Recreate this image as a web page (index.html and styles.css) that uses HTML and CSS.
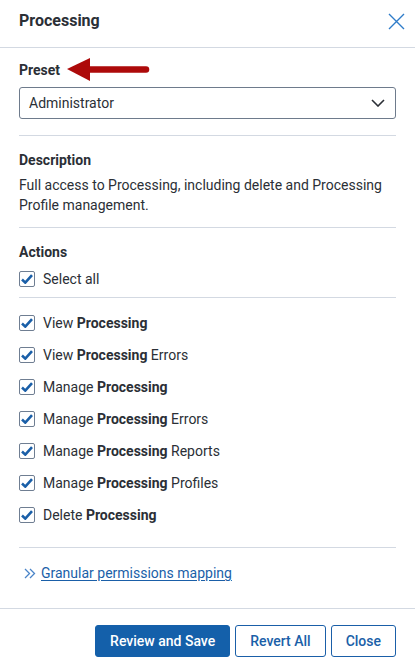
FILE: index.html
```html
<!DOCTYPE html>
<html>
<head>
<meta charset="utf-8">
<link rel="stylesheet" href="styles.css">
</head>
<body>
<div class="panel">
  <header class="header">
    <h1 class="title">Processing</h1>
    <button class="close-x" aria-label="Close">
      <svg width="17" height="17" viewBox="0 0 17 17"><path d="M1 1L16 16M16 1L1 16" stroke="#2f7cc9" stroke-width="1.4" fill="none"/></svg>
    </button>
  </header>
  <main class="body">
    <div class="preset-label-row">
      <span class="label">Preset</span>
      <svg class="arrow" width="84" height="26" viewBox="0 0 84 26"><path d="M0 12L23 1V24Z" fill="#ad0a0a"/><line x1="20" y1="12.5" x2="79" y2="12.5" stroke="#ad0a0a" stroke-width="6.5" stroke-linecap="round"/></svg>
    </div>
    <div class="select">
      <span>Administrator</span>
      <svg width="14" height="8" viewBox="0 0 14 8"><path d="M1 1L7 7L13 1" stroke="#2b2f36" stroke-width="1.6" fill="none"/></svg>
    </div>
    <hr class="divider d1">
    <div class="label">Description</div>
    <p class="desc">Full access to Processing, including delete and Processing Profile management.</p>
    <hr class="divider d2">
    <div class="label">Actions</div>
    <label class="check-row select-all"><span class="cb"><svg width="12" height="10" viewBox="0 0 12 10"><path d="M1 5.5L4.3 8.6L11 1.2" stroke="#1a5fa8" stroke-width="2.6" fill="none"/></svg></span>Select all</label>
    <hr class="divider d3">
    <ul class="list">
      <li class="check-row"><span class="cb"><svg width="12" height="10" viewBox="0 0 12 10"><path d="M1 5.5L4.3 8.6L11 1.2" stroke="#1a5fa8" stroke-width="2.6" fill="none"/></svg></span>View&nbsp;<b>Processing</b></li>
      <li class="check-row"><span class="cb"><svg width="12" height="10" viewBox="0 0 12 10"><path d="M1 5.5L4.3 8.6L11 1.2" stroke="#1a5fa8" stroke-width="2.6" fill="none"/></svg></span>View&nbsp;<b>Processing</b>&nbsp;Errors</li>
      <li class="check-row"><span class="cb"><svg width="12" height="10" viewBox="0 0 12 10"><path d="M1 5.5L4.3 8.6L11 1.2" stroke="#1a5fa8" stroke-width="2.6" fill="none"/></svg></span>Manage&nbsp;<b>Processing</b></li>
      <li class="check-row"><span class="cb"><svg width="12" height="10" viewBox="0 0 12 10"><path d="M1 5.5L4.3 8.6L11 1.2" stroke="#1a5fa8" stroke-width="2.6" fill="none"/></svg></span>Manage&nbsp;<b>Processing</b>&nbsp;Errors</li>
      <li class="check-row"><span class="cb"><svg width="12" height="10" viewBox="0 0 12 10"><path d="M1 5.5L4.3 8.6L11 1.2" stroke="#1a5fa8" stroke-width="2.6" fill="none"/></svg></span>Manage&nbsp;<b>Processing</b>&nbsp;Reports</li>
      <li class="check-row"><span class="cb"><svg width="12" height="10" viewBox="0 0 12 10"><path d="M1 5.5L4.3 8.6L11 1.2" stroke="#1a5fa8" stroke-width="2.6" fill="none"/></svg></span>Manage&nbsp;<b>Processing</b>&nbsp;Profiles</li>
      <li class="check-row"><span class="cb"><svg width="12" height="10" viewBox="0 0 12 10"><path d="M1 5.5L4.3 8.6L11 1.2" stroke="#1a5fa8" stroke-width="2.6" fill="none"/></svg></span>Delete&nbsp;<b>Processing</b></li>
    </ul>
    <hr class="divider d4">
    <div class="link-row">
      <svg width="12" height="11" viewBox="0 0 12 11"><path d="M1 1L5.5 5.5L1 10M6 1L10.5 5.5L6 10" stroke="#4a84c8" stroke-width="1.3" fill="none"/></svg>
      <a class="link" href="#">Granular permissions mapping</a>
    </div>
  </main>
  <footer class="footer">
    <button class="btn primary">Review and Save</button>
    <button class="btn">Revert All</button>
    <button class="btn">Close</button>
  </footer>
</div>
</body>
</html>
```

FILE: styles.css
```css
* { box-sizing: border-box; }
html, body { margin: 0; padding: 0; background: #fff; }
body {
  font-family: Roboto, "Liberation Sans", Arial, sans-serif;
  font-size: 14px;
  color: #2b2f36;
  width: 415px;
  height: 668px;
  overflow: hidden;
}
.panel { display: flex; flex-direction: column; }
.header {
  height: 48px;
  border-bottom: 1px solid #d3d9e2;
  display: flex;
  align-items: center;
  justify-content: space-between;
  padding: 0 10px 5px 19px;
}
.title { margin: 0; font-size: 16px; font-weight: 700; line-height: 20px; color: #2b2f36; }
.close-x { border: 0; background: none; padding: 0; width: 17px; height: 17px; display: block; }
.close-x svg { display: block; }
.body { padding: 12px 19px 25px 19px; border-bottom: 1px solid #d3d9e2; }
.label { font-weight: 700; line-height: 20px; color: #2b2f36; }
.preset-label-row { position: relative; height: 20px; }
.arrow { position: absolute; left: 48px; top: -3px; }
.select {
  margin-top: 7px;
  height: 32px;
  border: 1px solid #6e7b8c;
  border-radius: 3px;
  display: flex;
  align-items: center;
  justify-content: space-between;
  padding: 0 10px 0 9px;
  color: #2b2f36;
}
.select svg { display: block; }
.divider { border: 0; border-top: 1px solid #d3d9e2; margin: 0; height: 0; }
.d1 { margin-top: 16px; margin-bottom: 14px; }
.desc { margin: 5px 0 0; line-height: 20px; color: #2b2f36; }
.d2 { margin-top: 12px; margin-bottom: 14px; }
.check-row { display: flex; align-items: center; line-height: 20px; }
.check-row b { font-weight: 700; }
.cb {
  width: 16px; height: 16px;
  border: 1px solid #6f7e92;
  border-radius: 2px;
  margin-right: 8px;
  display: flex; align-items: center; justify-content: center;
  flex: none;
}
.cb svg { display: block; }
.select-all { margin-top: 7px; }
.d3 { margin-top: 8px; }
.list { list-style: none; margin: 9px 0 0; padding: 0; }
.list .check-row { height: 32px; }
.d4 { margin-top: 16px; margin-bottom: 15px; }
.link-row { display: flex; align-items: center; padding-left: 5px; gap: 5px; line-height: 20px; }
.link-row svg { display: block; }
.link { color: #1a5fa8; text-decoration: underline; text-underline-offset: 2px; }
.footer {
  display: flex;
  justify-content: flex-end;
  gap: 5px;
  padding: 16px 19px 0 0;
}
.btn {
  height: 32px;
  border: 1px solid #1a5fa8;
  border-radius: 3px;
  background: #fff;
  color: #1a5fa8;
  font-family: Roboto, "Liberation Sans", Arial, sans-serif;
  font-size: 14px;
  font-weight: 500;
  padding: 0 14px;
}
.primary { background: #1460aa; border-color: #1460aa; color: #fff; }
```
